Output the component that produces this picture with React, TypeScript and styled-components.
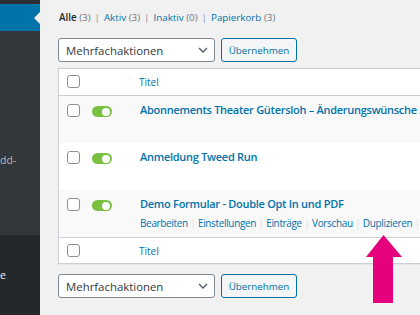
import React from 'react';
import styled, { createGlobalStyle } from 'styled-components';

const GlobalStyle = createGlobalStyle`
  html, body {
    margin: 0;
    padding: 0;
    background: #f1f1f1;
  }
  body {
    font-family: "Open Sans", "Noto Sans", sans-serif;
    font-size: 10px;
    color: #444;
  }
`;

const forms = [
  { title: 'Abonnements Theater Gütersloh – Änderungswünsche 2020', striped: true, actions: false },
  { title: 'Anmeldung Tweed Run', striped: false, actions: false },
  { title: 'Demo Formular - Double Opt In und PDF', striped: true, actions: true },
];

const rowActions = ['Bearbeiten', 'Einstellungen', 'Einträge', 'Vorschau', 'Duplizieren'];

export default function App() {
  return (
    <>
      <GlobalStyle />
      <Page>
        <Sidebar>
          <MenuTop />
          <MenuCurrent />
          <Submenu>
            <SideText $color="#b4b9be">dd-</SideText>
          </Submenu>
          <MenuRest>
            <SideText $color="#eeeeee">e</SideText>
          </MenuRest>
        </Sidebar>

        <Main>
          <StatusLinks>
            <Current>Alle</Current> <Count>(3)</Count>
            <Sep>|</Sep>
            <StatusLink>Aktiv</StatusLink> <Count>(3)</Count>
            <Sep>|</Sep>
            <StatusLink>Inaktiv</StatusLink> <Count>(0)</Count>
            <Sep>|</Sep>
            <StatusLink>Papierkorb</StatusLink> <Count>(3)</Count>
          </StatusLinks>

          <TableNav $gap={11}>
            <BulkSelect>
              <span>Mehrfachaktionen</span>
              <Chevron viewBox="0 0 10 6">
                <path d="M1 1l4 4 4-4" fill="none" stroke="#555d66" strokeWidth="1.4" />
              </Chevron>
            </BulkSelect>
            <ApplyButton>Übernehmen</ApplyButton>
          </TableNav>

          <ListTable>
            <HeadRow>
              <CheckCell $top={6}><Checkbox /></CheckCell>
              <div />
              <ColumnTitle>Titel</ColumnTitle>
            </HeadRow>

            {forms.map((f) => (
              <Row key={f.title} $striped={f.striped}>
                <CheckCell $top={8}><Checkbox /></CheckCell>
                <ToggleCell>
                  <Toggle />
                </ToggleCell>
                <TitleCell>
                  <FormTitle>{f.title}</FormTitle>
                  {f.actions && (
                    <Actions>
                      {rowActions.map((a) => (
                        <React.Fragment key={a}>
                          <ActionLink>{a}</ActionLink>
                          <ActionSep>|</ActionSep>
                        </React.Fragment>
                      ))}
                    </Actions>
                  )}
                </TitleCell>
              </Row>
            ))}

            <FootRow>
              <CheckCell $top={6}><Checkbox /></CheckCell>
              <div />
              <ColumnTitle>Titel</ColumnTitle>
            </FootRow>
          </ListTable>

          <TableNav $gap={10}>
            <BulkSelect>
              <span>Mehrfachaktionen</span>
              <Chevron viewBox="0 0 10 6">
                <path d="M1 1l4 4 4-4" fill="none" stroke="#555d66" strokeWidth="1.4" />
              </Chevron>
            </BulkSelect>
            <ApplyButton>Übernehmen</ApplyButton>
          </TableNav>

          <Arrow viewBox="0 0 36 68">
            <polygon points="17.5,0 0,22 7,22 7,68 27,68 27,22 36,22" fill="#e5007d" />
          </Arrow>
        </Main>
      </Page>
    </>
  );
}

const Page = styled.div`
  display: flex;
  width: 420px;
  height: 315px;
  overflow: hidden;
`;

const Sidebar = styled.div`
  width: 40px;
  flex-shrink: 0;
  display: flex;
  flex-direction: column;
  background: #23282d;
  overflow: hidden;
`;

const MenuTop = styled.div`
  height: 4px;
  background: #2a2f34;
`;

const MenuCurrent = styled.div`
  position: relative;
  height: 27px;
  background: #0073aa;

  &::after {
    content: '';
    position: absolute;
    right: 0;
    top: 8px;
    border: 6px solid transparent;
    border-right-color: #f1f1f1;
  }
`;

const Submenu = styled.div`
  height: 204px;
  padding-top: 120px;
  box-sizing: border-box;
  background: #32373c;
`;

const MenuRest = styled.div`
  flex: 1;
  padding-top: 31px;
  background: #23282d;
`;

const SideText = styled.div<{ $color: string }>`
  line-height: 18px;
  font-size: 10.5px;
  white-space: nowrap;
  color: ${(p) => p.$color};
`;

const Main = styled.div`
  position: relative;
  flex: 1;
  min-width: 0;
  padding: 9px 0 0 18px;
  overflow: hidden;
  background: #f1f1f1;
`;

const StatusLinks = styled.div`
  line-height: 18px;
  font-size: 9.8px;
  white-space: nowrap;
  padding-left: 1px;
`;

const Current = styled.span`
  color: #23282d;
  font-weight: 600;
`;

const StatusLink = styled.span`
  color: #0073aa;
`;

const Count = styled.span`
  color: #72777c;
`;

const Sep = styled.span`
  color: #8c8f94;
  margin: 0 4px;
`;

const TableNav = styled.div<{ $gap: number }>`
  display: flex;
  gap: 6px;
  margin-top: ${(p) => p.$gap}px;
`;

const BulkSelect = styled.div`
  box-sizing: border-box;
  width: 157px;
  height: 24px;
  display: flex;
  align-items: center;
  justify-content: space-between;
  padding: 0 6px 0 7px;
  background: #fff;
  border: 1px solid #7e8993;
  border-radius: 3px;
  color: #32373c;
  font-size: 11.4px;
`;

const Chevron = styled.svg`
  width: 10px;
  height: 6px;
`;

const ApplyButton = styled.div`
  box-sizing: border-box;
  height: 24px;
  width: 76px;
  display: flex;
  align-items: center;
  justify-content: center;
  border: 1px solid #0071a1;
  border-radius: 3px;
  background: #f3f5f6;
  color: #0071a1;
  font-size: 9.8px;
`;

const ListTable = styled.div`
  width: 560px;
  margin-top: 6px;
  background: #fff;
  border: 1px solid #ccd0d4;
  box-shadow: 0 1px 1px rgba(0, 0, 0, 0.04);
`;

const gridCols = `
  display: grid;
  grid-template-columns: 33px 48px 1fr;
`;

const HeadRow = styled.div`
  ${gridCols};
  height: 26px;
  border-bottom: 1px solid #ccd0d4;
`;

const FootRow = styled.div`
  ${gridCols};
  height: 25px;
  border-top: 1px solid #ccd0d4;
`;

const Row = styled.div<{ $striped: boolean }>`
  ${gridCols};
  height: 47px;
  background: ${(p) => (p.$striped ? '#f9f9f9' : '#fff')};
`;

const CheckCell = styled.div<{ $top: number }>`
  padding: ${(p) => p.$top}px 0 0 8px;
`;

const Checkbox = styled.div`
  box-sizing: border-box;
  width: 13px;
  height: 13px;
  border: 1px solid #8c8f94;
  border-radius: 3px;
  background: #fff;
`;

const ToggleCell = styled.div`
  padding-top: 10px;
`;

const Toggle = styled.div`
  position: relative;
  width: 20px;
  height: 11px;
  border-radius: 6px;
  background: #7ac142;

  &::after {
    content: '';
    position: absolute;
    right: 2px;
    top: 1.5px;
    width: 8px;
    height: 8px;
    border-radius: 50%;
    background: #fff;
  }
`;

const ColumnTitle = styled.div`
  display: flex;
  align-items: center;
  margin-left: -1px;
  color: #0073aa;
  font-size: 10px;
`;

const TitleCell = styled.div`
  padding-top: 5px;
  white-space: nowrap;
`;

const FormTitle = styled.div`
  line-height: 18px;
  font-size: 11px;
  font-weight: 600;
  letter-spacing: -0.28px;
  color: #0073aa;
`;

const Actions = styled.div`
  margin-top: 2px;
  line-height: 16px;
  font-size: 10px;
  letter-spacing: -0.35px;
`;

const ActionLink = styled.span`
  color: #0073aa;
`;

const ActionSep = styled.span`
  color: #ddd;
  margin: 0 2.5px;
`;

const Arrow = styled.svg`
  display: block;
  position: absolute;
  left: 326px;
  top: 235px;
  width: 36px;
  height: 68px;
`;
